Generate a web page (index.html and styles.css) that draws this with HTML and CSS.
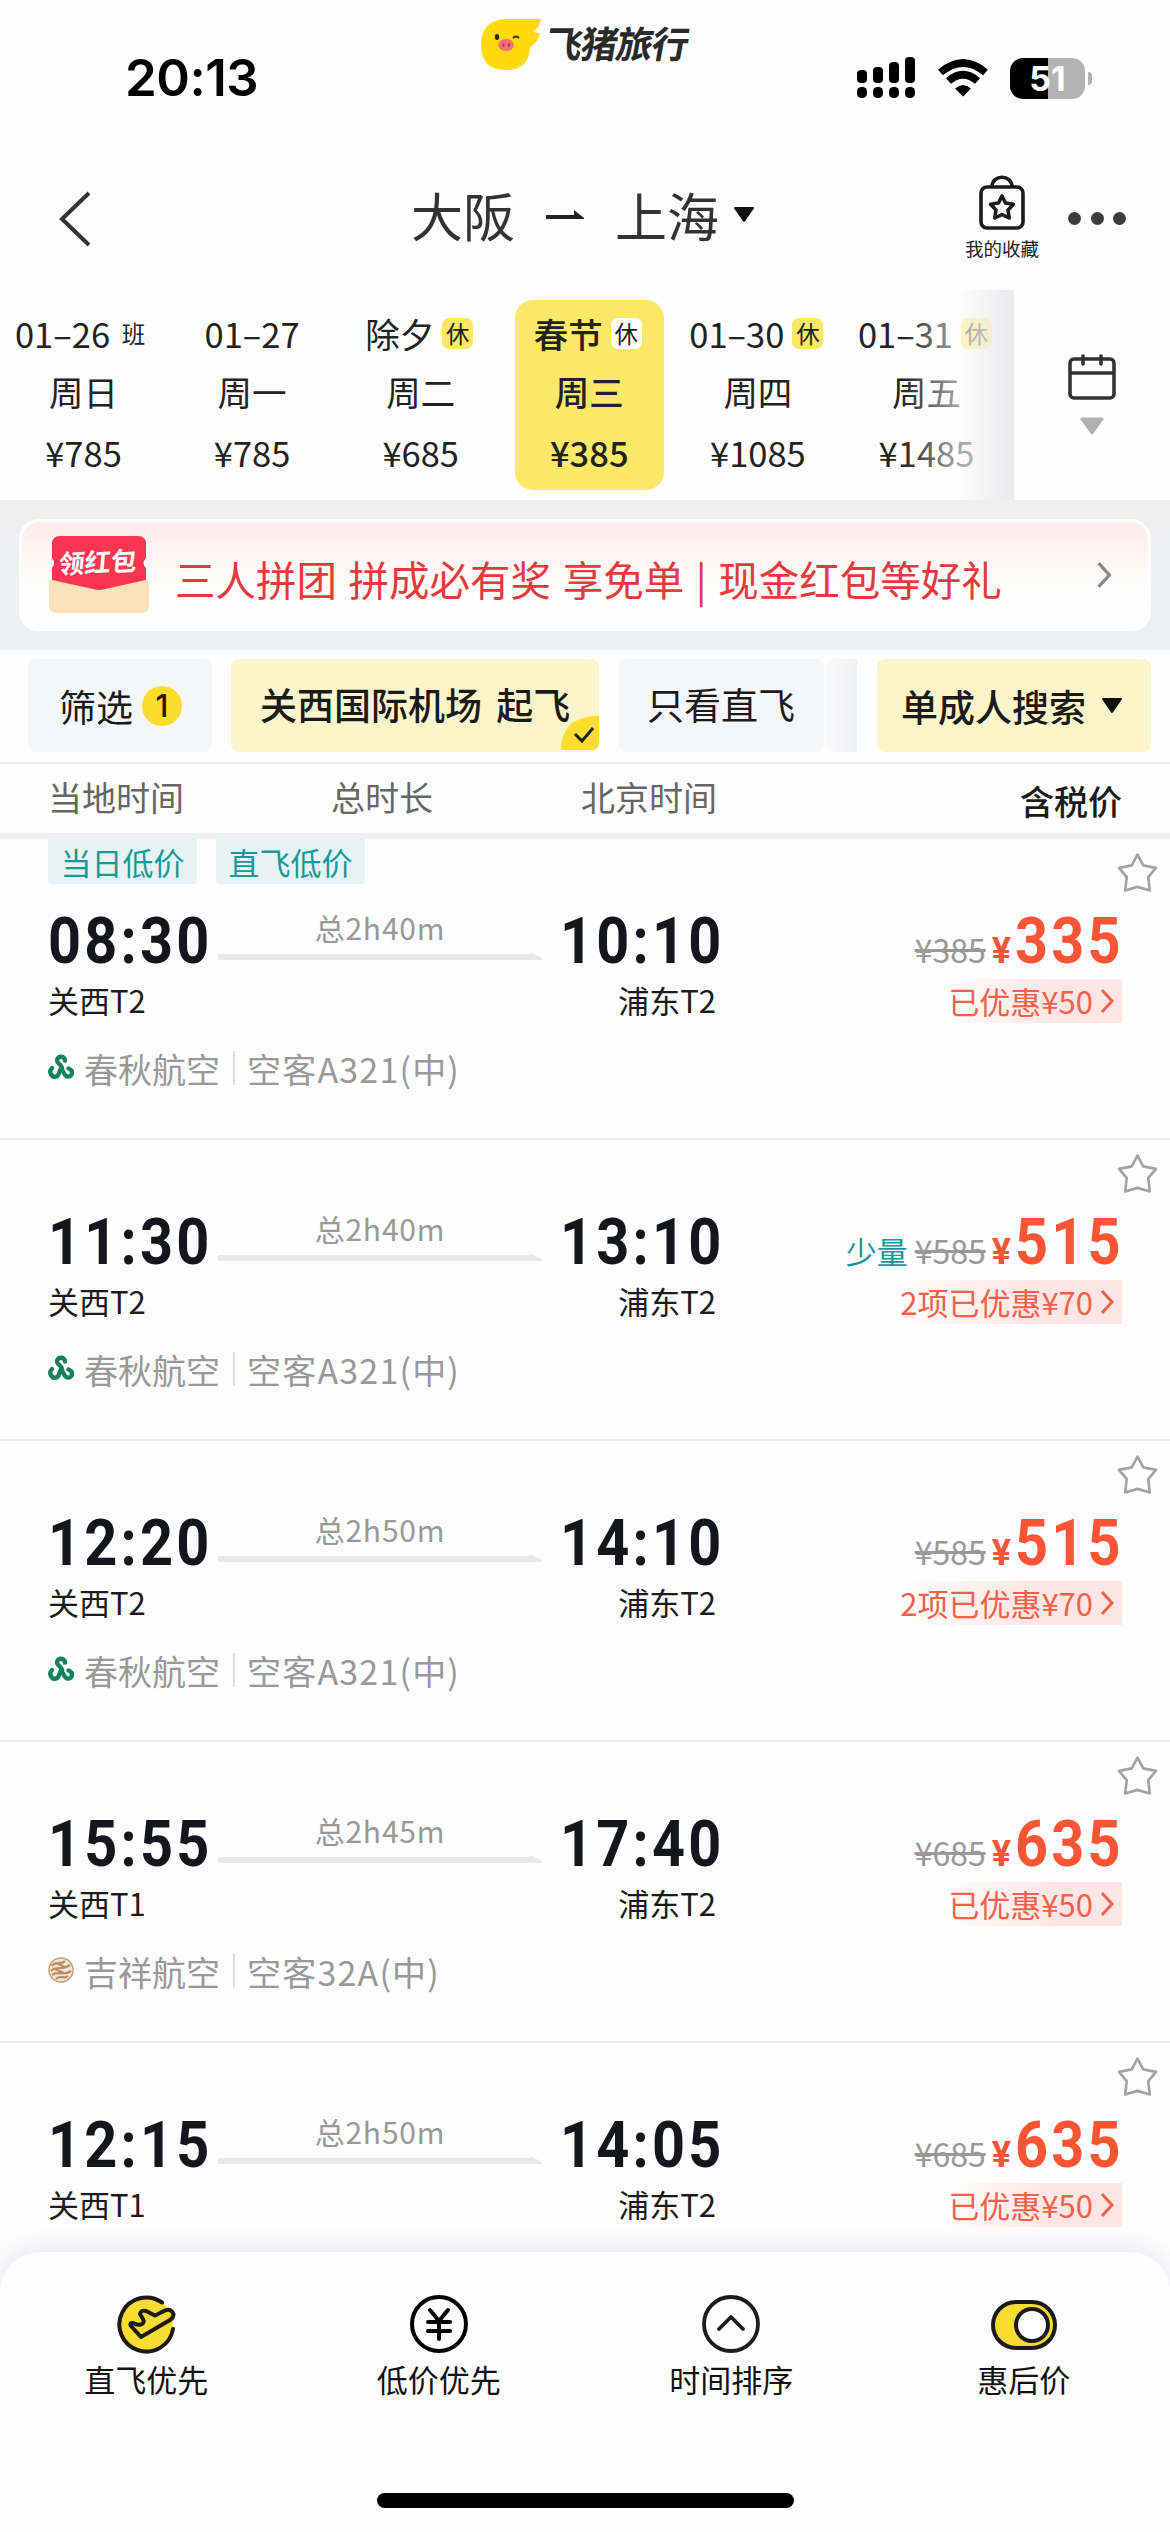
FILE: index.html
```html
<!DOCTYPE html>
<html lang="zh-CN">
  <head>
    <meta charset="utf-8">
    <title>大阪 - 上海</title>
    <link rel="stylesheet" href="styles.css">
  </head>
  <body>
    <svg class="defs">
      <symbol id="star" viewBox="0 0 40 40">
        <path d="M20 2.500 25.600 13 38 15.500 30.500 24.500 32 37.500 20 34 8 37.500 9.500 24.500 2 15.500 14.400 13Z" fill="none" stroke="#a3a3a3" stroke-width="2.600" stroke-linejoin="round"/>
      </symbol>
      <symbol id="next" viewBox="0 0 14 26">
        <path d="M2 2 12 13 2 24" fill="none" stroke="currentColor" stroke-width="3"/>
      </symbol>
      <symbol id="spring" viewBox="0 0 26 26">
        <g fill="none" stroke="#14825c" stroke-width="4.400" stroke-linecap="round">
          <path d="M17 6.500C17 1.500 9 1.500 9 6.500 9 10 14 10 14 15"/>
          <path d="M4 14C0 18 4 24 8.500 22.500 12 21 10.500 16 14 14"/>
          <path d="M20.500 14.500C26 16 24.500 23.500 19.500 22.500 16 22 16 17 13 15"/>
        </g>
      </symbol>
      <symbol id="juneyao" viewBox="0 0 26 26">
        <circle cx="13" cy="13" r="12" fill="#f4e6d6" stroke="#c39a72" stroke-width="1.400"/>
        <path d="M4 9C8 3 13 9 17 4M3 14C8 8 13 14 22 8M4 18C9 13 15 20 23 14M8 22C13 17 16 23 20 19M10 7l7 3M7 12l9 4" fill="none" stroke="#b98d68" stroke-width="2.200"/>
      </symbol>
    </svg>

    <div class="page">
      <header class="status">
        <div class="clock">20:13</div>
        <div class="brand">
          <svg width="62" height="54" viewBox="0 0 62 54">
            <path d="M25 1H61Q60 9 53 14 57 15 60 15 58 25 50 29 49 52 26 52 1 52 1 27 1 3 25 1Z" fill="#ffd908"/>
            <ellipse cx="17" cy="19" rx="2.200" ry="3" fill="#2b2522"/>
            <path d="M33 20Q36 17 39 20" fill="none" stroke="#2b2522" stroke-width="1.800"/>
            <ellipse cx="26" cy="27" rx="8" ry="6" fill="#f0717c"/>
            <ellipse cx="23.500" cy="27" rx="1.200" ry="2" fill="#b23c48"/>
            <ellipse cx="29" cy="27" rx="1.200" ry="2" fill="#b23c48"/>
          </svg>
          <span>飞猪旅行</span>
        </div>
        <div class="signals">
          <svg width="60" height="42" viewBox="0 0 60 42">
            <rect x="0" y="13" width="10" height="13" rx="4"/>
            <rect x="16" y="10" width="10" height="16" rx="4"/>
            <rect x="32" y="5" width="10" height="21" rx="4"/>
            <rect x="48" y="0" width="10" height="26" rx="4"/>
            <rect x="0" y="30" width="10" height="11" rx="4.500"/>
            <rect x="16" y="30" width="10" height="11" rx="4.500"/>
            <rect x="32" y="30" width="10" height="11" rx="4.500"/>
            <rect x="48" y="30" width="10" height="11" rx="4.500"/>
          </svg>
          <svg width="52" height="38" viewBox="0 0 52 38">
            <g fill="none" stroke="#000" stroke-width="7.500">
              <path d="M3.500 13.500Q26-5.500 48.500 13.500"/>
              <path d="M11.500 22Q26 9.500 40.500 22"/>
            </g>
            <path d="M26 37.500 18 29.500Q26 22.500 34 29.500Z"/>
          </svg>
          <div class="battery"><span>51</span></div>
        </div>
      </header>

      <nav class="title-bar">
        <svg class="back" width="34" height="56" viewBox="0 0 34 56"><path d="M31 2 4 28 31 54" fill="none" stroke="#333" stroke-width="4"/></svg>
        <h1 class="route-title">
          <span>大阪</span>
          <svg width="38" height="10" viewBox="0 0 38 10"><path d="M0 5H28V0L38 8V9H0Z" fill="#222"/></svg>
          <span>上海</span>
          <svg class="caret" width="22" height="16" viewBox="0 0 22 16"><path d="M2 1H20L11 14Z" fill="#111" stroke="#111" stroke-width="2" stroke-linejoin="round"/></svg>
        </h1>
        <div class="favorite">
          <svg width="48" height="56" viewBox="0 0 48 56">
            <g fill="none" stroke="#1b1b1b" stroke-width="3.600" stroke-linejoin="round">
              <rect x="3" y="12" width="42" height="41" rx="6"/>
              <path d="M14 12C14-1 34-1 34 12"/>
              <path d="M24 21 27.500 28 35.500 29.300 30 35 31.200 43 24 39.500 16.800 43 18 35 12.500 29.300 20.500 28Z"/>
            </g>
          </svg>
          <span>我的收藏</span>
        </div>
        <div class="more"><i></i><i></i><i></i></div>
      </nav>

      <section class="dates">
        <div class="date-list">
          <div class="date"><div class="day">01–26<em class="plain">班</em></div><div class="week">周日</div><div class="fare">¥785</div></div>
          <div class="date"><div class="day">01–27</div><div class="week">周一</div><div class="fare">¥785</div></div>
          <div class="date"><div class="day">除夕<em>休</em></div><div class="week">周二</div><div class="fare">¥685</div></div>
          <div class="date active"><div class="day">春节<em>休</em></div><div class="week">周三</div><div class="fare">¥385</div></div>
          <div class="date"><div class="day">01–30<em>休</em></div><div class="week">周四</div><div class="fare">¥1085</div></div>
          <div class="date"><div class="day">01–31<em>休</em></div><div class="week">周五</div><div class="fare">¥1485</div></div>
        </div>
        <div class="calendar">
          <svg width="48" height="46" viewBox="0 0 48 46">
            <g fill="none" stroke="#333" stroke-width="3.600" stroke-linecap="round">
              <rect x="2" y="5" width="44" height="39" rx="4"/>
              <path d="M3 19H45M15 2V10M33 2V10"/>
            </g>
          </svg>
          <svg width="24" height="18" viewBox="0 0 24 18"><path d="M2 2H22L12 16Z" fill="#b0b0b0" stroke="#b0b0b0" stroke-width="3" stroke-linejoin="round"/></svg>
        </div>
      </section>

      <section class="promo">
        <div class="promo-card">
          <div class="packet">
            <svg width="100" height="78" viewBox="0 0 100 78">
              <path d="M0 44H100V70Q100 77 93 77H7Q0 77 0 70Z" fill="#fbe2bb"/>
              <path d="M3 44V32Q7 27 3 22V8Q3 0 11 0H89Q97 0 97 8V22Q92 27 97 32V44L56 53Q50 55 44 53Z" fill="#fb3550"/>
            </svg>
            <span>领红包</span>
          </div>
          <p>三人拼团 拼成必有奖 享免单 | 现金红包等好礼</p>
          <svg class="arrow" width="16" height="28"><use href="#next"/></svg>
        </div>
      </section>

      <section class="filters">
        <div class="chip-scroll">
          <div class="chip filter">筛选<b>1</b></div>
          <div class="chip on">关西国际机场 起飞
            <svg class="tick" width="38" height="34" viewBox="0 0 38 34"><path d="M0 34C0 10 15 0 38 0V26Q38 34 30 34Z" fill="#fbdd2f"/><path d="M14 18 21 25 32 12" fill="none" stroke="#222" stroke-width="3"/></svg>
          </div>
          <div class="chip direct">只看直飞</div>
          <div class="chip rest"></div>
        </div>
        <div class="chip on adult">单成人搜索
          <svg width="22" height="16" viewBox="0 0 22 16"><path d="M2 1H20L11 14Z" fill="#111" stroke="#111" stroke-width="2" stroke-linejoin="round"/></svg>
        </div>
      </section>

      <div class="columns">
        <span>当地时间</span>
        <span>总时长</span>
        <span>北京时间</span>
        <strong>含税价</strong>
      </div>

      <main class="flights">
        <article class="flight">
          <svg class="star"><use href="#star"/></svg>
          <div class="tags"><span>当日低价</span><span>直飞低价</span></div>
          <div class="info">
            <div class="time">08:30</div>
            <div class="duration"><span>总2h40m</span></div>
            <div class="time">10:10</div>
            <div class="price"><del>¥385</del><small>¥</small><b>335</b></div>
          </div>
          <div class="terminals"><span>关西T2</span><span>浦东T2</span><div class="off">已优惠¥50<svg><use href="#next"/></svg></div></div>
          <div class="airline"><svg><use href="#spring"/></svg><span>春秋航空</span><span class="plane">空客A321(中)</span></div>
        </article>

        <article class="flight">
          <svg class="star"><use href="#star"/></svg>
          <div class="tags"></div>
          <div class="info">
            <div class="time">11:30</div>
            <div class="duration"><span>总2h40m</span></div>
            <div class="time">13:10</div>
            <div class="price"><i>少量</i><del>¥585</del><small>¥</small><b>515</b></div>
          </div>
          <div class="terminals"><span>关西T2</span><span>浦东T2</span><div class="off">2项已优惠¥70<svg><use href="#next"/></svg></div></div>
          <div class="airline"><svg><use href="#spring"/></svg><span>春秋航空</span><span class="plane">空客A321(中)</span></div>
        </article>

        <article class="flight">
          <svg class="star"><use href="#star"/></svg>
          <div class="tags"></div>
          <div class="info">
            <div class="time">12:20</div>
            <div class="duration"><span>总2h50m</span></div>
            <div class="time">14:10</div>
            <div class="price"><del>¥585</del><small>¥</small><b>515</b></div>
          </div>
          <div class="terminals"><span>关西T2</span><span>浦东T2</span><div class="off">2项已优惠¥70<svg><use href="#next"/></svg></div></div>
          <div class="airline"><svg><use href="#spring"/></svg><span>春秋航空</span><span class="plane">空客A321(中)</span></div>
        </article>

        <article class="flight">
          <svg class="star"><use href="#star"/></svg>
          <div class="tags"></div>
          <div class="info">
            <div class="time">15:55</div>
            <div class="duration"><span>总2h45m</span></div>
            <div class="time">17:40</div>
            <div class="price"><del>¥685</del><small>¥</small><b>635</b></div>
          </div>
          <div class="terminals"><span>关西T1</span><span>浦东T2</span><div class="off">已优惠¥50<svg><use href="#next"/></svg></div></div>
          <div class="airline"><svg><use href="#juneyao"/></svg><span>吉祥航空</span><span class="plane">空客32A(中)</span></div>
        </article>

        <article class="flight">
          <svg class="star"><use href="#star"/></svg>
          <div class="tags"></div>
          <div class="info">
            <div class="time">12:15</div>
            <div class="duration"><span>总2h50m</span></div>
            <div class="time">14:05</div>
            <div class="price"><del>¥685</del><small>¥</small><b>635</b></div>
          </div>
          <div class="terminals"><span>关西T1</span><span>浦东T2</span><div class="off">已优惠¥50<svg><use href="#next"/></svg></div></div>
        </article>
      </main>

      <footer class="bottom">
        <div class="sorts">
          <div class="sort">
            <svg viewBox="0 0 60 60">
              <circle cx="30" cy="30" r="27" fill="#f9dc32"/>
              <g fill="none" stroke="#1d1a14" stroke-width="4" stroke-linejoin="round" stroke-linecap="round">
                <path d="M46 8.500A27 27 0 1 0 57 35"/>
                <path d="M25 43 15 32Q13 28.500 17 29 21 31.500 25 30.500 29 29 27 25L24 20Q25 15.500 30 17L39 21.500 49 16.500Q55 14 57.500 20 57.500 24 54 26Z"/>
              </g>
            </svg>
            <span>直飞优先</span>
          </div>
          <div class="sort">
            <svg viewBox="0 0 60 60"><g fill="none" stroke="#000" stroke-width="4" stroke-linecap="round"><circle cx="30" cy="30" r="27"/><path d="M21 16 30 27 39 16M30 27V45M19 28H41M19 37H41"/></g></svg>
            <span>低价优先</span>
          </div>
          <div class="sort">
            <svg viewBox="0 0 60 60"><g fill="none" stroke="#1b1b1b" stroke-width="3.800" stroke-linecap="round" stroke-linejoin="round"><circle cx="30" cy="30" r="27"/><path d="M18 35 30 23 42 35"/></g></svg>
            <span>时间排序</span>
          </div>
          <div class="sort">
            <svg class="wide" viewBox="0 0 68 60"><g stroke="#1b1b1b" stroke-width="4"><rect x="3" y="8" width="62" height="46" rx="23" fill="#f9dc32"/><circle cx="42" cy="31" r="16" fill="#fff"/></g></svg>
            <span>惠后价</span>
          </div>
        </div>
        <div class="home"></div>
      </footer>
    </div>
  </body>
</html>
```
FILE: styles.css
```css
* { box-sizing: border-box; }
body {
  margin: 0;
  background: #fdfdfd;
  font-family: "Noto Sans CJK SC", sans-serif;
  color: #222;
}
svg {
  display: block;
  flex: none;
}
.defs {
  position: absolute;
  width: 0;
  height: 0;
}
.page {
  width: 1170px;
  height: 2532px;
  overflow: hidden;
  display: flex;
  flex-direction: column;
}

/* status bar */
.status {
  height: 160px;
  display: grid;
  grid-template-columns: 480px 1fr 314px;
}
.clock {
  padding: 46px 0 0 125px;
  font: 600 51px/64px Inter, sans-serif;
  color: #000;
  letter-spacing: -0.5px;
}
.brand {
  display: flex;
  align-items: flex-start;
  padding-top: 18px;
}
.brand span {
  margin-left: 4px;
  font-size: 37px;
  font-weight: 700;
  line-height: 48px;
  letter-spacing: -1.5px;
  transform: skewX(-10deg);
  white-space: nowrap;
  color: #2a2a2a;
}
.signals {
  display: flex;
  align-items: center;
  height: 42px;
  margin-top: 57px;
}
.signals svg:first-child { margin-left: 1px; }
.signals svg + svg { margin-left: 20px; }
.battery {
  position: relative;
  width: 75px;
  height: 41px;
  margin-left: 21px;
  border-radius: 13px;
  background: linear-gradient(90deg, #000 51%, #b3b3b3 51%);
  color: #fff;
  font: 700 34px/41px Inter, sans-serif;
  text-align: center;
}
.battery::after {
  content: "";
  position: absolute;
  right: -7px;
  top: 14px;
  width: 4px;
  height: 13px;
  border-radius: 0 4px 4px 0;
  background: #b3b3b3;
}

/* title */
.title-bar {
  height: 130px;
  display: flex;
}
.back { margin: 31px 0 0 58px; }
.route-title {
  display: flex;
  align-items: center;
  height: 80px;
  margin: 15px 0 0 319px;
  font-size: 52px;
  font-weight: 400;
  line-height: 80px;
  color: #333;
}
.route-title span + svg { margin: 0 31px; }
.route-title .caret { margin: 0 0 0 14px; }
.favorite {
  width: 80px;
  margin: 15px 0 0 207px;
  display: flex;
  flex-direction: column;
  align-items: center;
  font-size: 18.500px;
  line-height: 26px;
  white-space: nowrap;
}
.favorite span { margin-top: 4px; }
.more {
  display: flex;
  gap: 9.500px;
  margin: 52px 0 0 26px;
}
.more i {
  width: 13px;
  height: 13px;
  border-radius: 50%;
  background: #3c3c3c;
}

/* dates */
.dates {
  height: 210px;
  display: flex;
}
.date-list {
  position: relative;
  width: 1014px;
  display: flex;
  overflow: hidden;
}
.date-list::after {
  content: "";
  position: absolute;
  top: 0;
  right: 0;
  width: 112px;
  height: 100%;
  background: linear-gradient(90deg, rgba(253,253,253,0), rgba(253,253,253,.6) 50%, rgba(232,232,235,.9));
}
.date {
  flex: none;
  width: 149px;
  height: 190px;
  margin: 10px 0 0 19.600px;
  text-align: center;
  white-space: nowrap;
  font-size: 34.500px;
}
.date:first-child { margin-left: 9px; }
.date.active {
  border-radius: 18px;
  background: #fbe869;
  font-weight: 500;
}
.day {
  display: flex;
  align-items: center;
  justify-content: center;
  height: 44px;
  margin: 11px -10px 0;
  line-height: 44px;
}
.day em {
  width: 31px;
  height: 31px;
  margin: 0 3px 0 8px;
  border-radius: 7px;
  background: #fbe869;
  font-size: 23.500px;
  font-weight: 400;
  font-style: normal;
  line-height: 30px;
}
.day .plain { background: none; }
.active em { background: #fff; }
.week {
  margin-top: 11px;
  line-height: 50px;
}
.fare { line-height: 72px; }
.calendar {
  flex: 1;
  display: flex;
  flex-direction: column;
  align-items: center;
  padding: 64px 0 0;
}
.calendar svg { margin-bottom: 17px; }

/* promo */
.promo {
  height: 150px;
  padding: 19px;
  background: linear-gradient(#efeff0, #edf0f3);
}
.promo-card {
  height: 112px;
  display: flex;
  border: 3px solid #fff;
  border-radius: 20px;
  background: linear-gradient(#ffeaec, #fffafa 50%, #fdfdfd 70%);
}
.packet {
  position: relative;
  margin: 14px 0 0 27px;
  height: 78px;
}
.packet span {
  position: absolute;
  left: 0;
  top: 6px;
  width: 98px;
  text-align: center;
  font-size: 26px;
  font-weight: 700;
  line-height: 38px;
  color: #fff;
  transform: rotate(-3deg) skewX(-8deg);
}
.promo p {
  flex: 1;
  margin: 26px 0 0 26px;
  font-size: 40.500px;
  line-height: 62px;
  word-spacing: 2.500px;
  white-space: nowrap;
  color: #e5393b;
}
.arrow {
  margin: 39px 36px 0 0;
  color: #888;
}

/* filters */
.filters {
  height: 114px;
  padding: 9px 19px 0 28px;
  display: flex;
  justify-content: space-between;
  border-bottom: 2px solid #e9edf0;
}
.chip-scroll {
  width: 829px;
  display: flex;
  overflow: hidden;
}
.chip {
  position: relative;
  flex: none;
  height: 93px;
  border-radius: 8px;
  background: #f5f6f8;
  font-size: 37px;
  line-height: 90px;
  white-space: nowrap;
  color: #1b1b1b;
}
.chip.on {
  background: #fcf5cb;
  font-weight: 500;
}
.filter {
  width: 184px;
  display: flex;
  align-items: center;
  padding-left: 31px;
}
.filter b {
  width: 40px;
  height: 40px;
  margin-left: 9px;
  border-radius: 50%;
  background: #fbdc2c;
  font: 500 31px/40px Inter, sans-serif;
  text-align: center;
}
.chip-scroll .on {
  width: 368px;
  margin: 0 20px 0 19px;
  padding-left: 29px;
  word-spacing: 6px;
}
.tick {
  position: absolute;
  right: 0;
  bottom: 2px;
}
.direct {
  width: 205px;
  padding-left: 28px;
}
.rest {
  width: 60px;
  margin-left: 2px;
  background: linear-gradient(90deg, #fafafb, #f0f1f3 32px);
}
.adult {
  width: 274px;
  display: flex;
  align-items: center;
  gap: 15px;
  padding-left: 24px;
}

/* column titles */
.columns {
  height: 75px;
  display: grid;
  grid-template-columns: 283px 250px 300px 1fr;
  padding: 0 48px;
  border-bottom: 6px solid #efefef;
  font-size: 34px;
  line-height: 66px;
  color: #666;
}
.columns strong {
  font-weight: 500;
  line-height: 74px;
  text-align: right;
  color: #1b1b1b;
}

/* flights */
.flights {
  height: 1453px;
  flex: none;
  overflow: hidden;
}
.flight {
  position: relative;
  height: 301px;
  padding: 0 48px;
  border-bottom: 2px solid #ebebeb;
}
.star {
  position: absolute;
  right: 12px;
  top: 13px;
  width: 41px;
  height: 41px;
}
.tags {
  display: flex;
  gap: 19px;
  height: 71px;
}
.tags span {
  width: 149px;
  height: 45px;
  border-radius: 0 0 4px 4px;
  background: #e6f3f3;
  font-size: 31px;
  line-height: 45px;
  text-align: center;
  color: #17999a;
}
.info {
  display: flex;
  height: 64px;
}
/* narrow digits, spaced out again to keep the pitch */
.time, .price b {
  font: 700 64px/64px Roboto, sans-serif;
  letter-spacing: 3.600px;
  transform: scaleX(.9);
  transform-origin: 0 0;
}
.time {
  width: 170px;
  color: #15161c;
}
.duration {
  width: 342px;
  padding: 0 18px 0 0;
  text-align: center;
  font-size: 30px;
  line-height: 34px;
  letter-spacing: .8px;
  color: #999;
}
.duration span {
  display: block;
  height: 42px;
}
.duration::after {
  content: "";
  display: block;
  height: 8px;
  background: #e9e9e9;
  clip-path: polygon(0 2px, 312px 2px, 312px 0, 100% 6px, 100% 8px, 0 8px);
}
.price {
  flex: 1;
  display: flex;
  align-items: baseline;
  justify-content: flex-end;
  line-height: 64px;
  white-space: nowrap;
  color: #fa5535;
}
.price b {
  width: 107px;
}
.price small {
  margin: 0 4px 0 6px;
  font: 700 36px/40px Roboto, sans-serif;
}
.price del {
  font-size: 32px;
  line-height: 40px;
  color: #999;
}
.price i {
  margin-right: 7px;
  font-size: 31px;
  line-height: 40px;
  font-style: normal;
  color: #17999a;
}
.terminals {
  display: flex;
  height: 50px;
  padding-top: 4px;
  font-size: 31px;
  line-height: 44px;
  color: #1b1b1b;
}
.terminals span { width: 334px; }
.terminals span + span { text-align: right; }
.off {
  display: flex;
  align-items: center;
  height: 44px;
  margin: 1px 0 0 auto;
  padding-right: 8px;
  background: linear-gradient(90deg, rgba(254,230,228,0), #fee6e4 60%);
  line-height: 42px;
  color: #f4604a;
}
.off svg {
  width: 14px;
  height: 26px;
  margin-left: 7px;
}
.airline {
  display: flex;
  align-items: center;
  margin-top: 23px;
  font-size: 34px;
  line-height: 44px;
  color: #999;
}
.airline svg {
  width: 26px;
  height: 26px;
  margin: -4px 10px 0 0;
}
.plane {
  margin-left: 13px;
  padding-left: 14px;
  letter-spacing: 1.200px;
  background: linear-gradient(#ddd, #ddd) 0 4px / 2px 34px no-repeat;
}

/* bottom bar */
.bottom {
  position: relative;
  height: 280px;
  margin-top: -40px;
  border-radius: 40px 40px 0 0;
  background: #fdfdfd;
  box-shadow: 0 -4px 24px rgba(60, 50, 110, .11);
}
.sorts {
  display: grid;
  grid-template-columns: repeat(4, 1fr);
  height: 241px;
  padding-top: 42px;
}
.sort {
  display: flex;
  flex-direction: column;
  align-items: center;
  font-size: 31px;
  line-height: 44px;
  color: #111;
}
.sort svg {
  width: 60px;
  height: 60px;
  margin-bottom: 3px;
}
.sort .wide { width: 68px; }
.home {
  width: 417px;
  height: 15px;
  margin: 0 auto;
  border-radius: 8px;
  background: #000;
}
```
